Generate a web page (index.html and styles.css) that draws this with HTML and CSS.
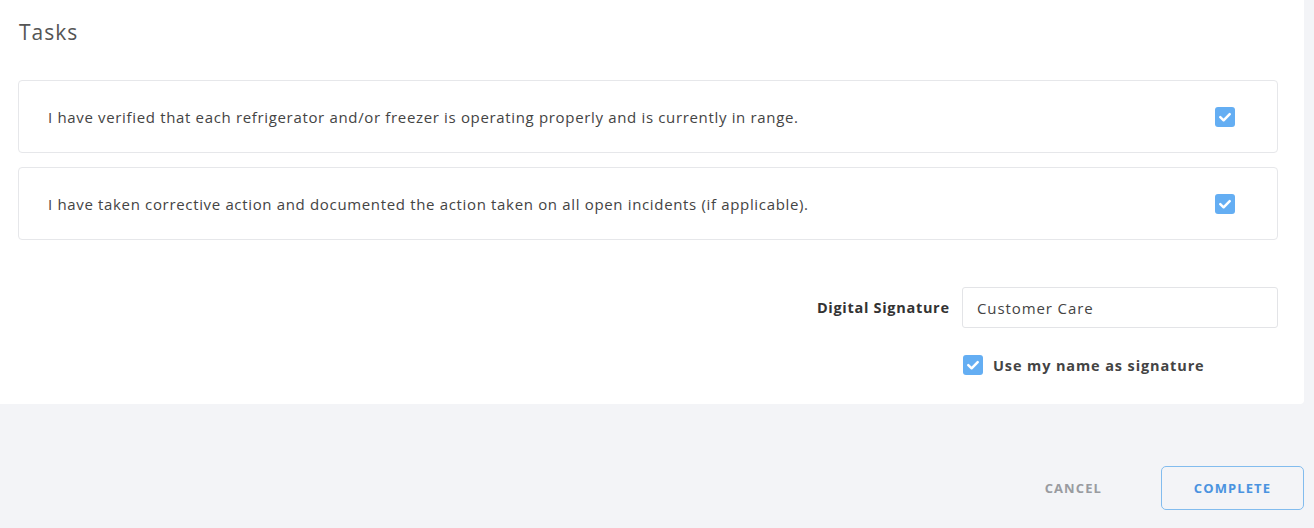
FILE: index.html
```html
<!DOCTYPE html>
<html>
<head>
<meta charset="utf-8">
<link rel="stylesheet" href="styles.css">
</head>
<body>
<div class="page">
  <section class="panel">
    <h2 class="title">Tasks</h2>
    <div class="tasks">
      <div class="task">
        <span class="task-text">I have verified that each refrigerator and/or freezer is operating properly and is currently in range.</span>
        <span class="check"><svg viewBox="0 0 20 20" width="20" height="20"><path d="M5.3 10.2 L8.6 13.3 L14.7 7.2" fill="none" stroke="#fff" stroke-width="2.5" stroke-linecap="round" stroke-linejoin="round"/></svg></span>
      </div>
      <div class="task">
        <span class="task-text">I have taken corrective action and documented the action taken on all open incidents (if applicable).</span>
        <span class="check"><svg viewBox="0 0 20 20" width="20" height="20"><path d="M5.3 10.2 L8.6 13.3 L14.7 7.2" fill="none" stroke="#fff" stroke-width="2.5" stroke-linecap="round" stroke-linejoin="round"/></svg></span>
      </div>
    </div>
    <div class="signature">
      <div class="sig-row">
        <label class="sig-label">Digital Signature</label>
        <div class="sig-input">Customer Care</div>
      </div>
      <div class="use-row">
        <span class="check"><svg viewBox="0 0 20 20" width="20" height="20"><path d="M5.3 10.2 L8.6 13.3 L14.7 7.2" fill="none" stroke="#fff" stroke-width="2.5" stroke-linecap="round" stroke-linejoin="round"/></svg></span>
        <span class="use-label">Use my name as signature</span>
      </div>
    </div>
  </section>
  <footer class="footer">
    <button class="btn btn-cancel">CANCEL</button>
    <button class="btn btn-complete">COMPLETE</button>
  </footer>
</div>
</body>
</html>
```

FILE: styles.css
```css
* { box-sizing: border-box; }
html, body {
  margin: 0;
  padding: 0;
  background: #f3f4f7;
  font-family: "Open Sans", "Liberation Sans", Arial, sans-serif;
}
.page {
  width: 1314px;
  height: 528px;
  display: flex;
  flex-direction: column;
}
.panel {
  width: 1304px;
  height: 404px;
  background: #fff;
  border-bottom-right-radius: 4px;
  padding: 18px 26px 0 18px;
}
.title {
  margin: 0 0 0 1px;
  font-size: 21px;
  font-weight: 400;
  color: #555;
  line-height: 28px;
  letter-spacing: 1px;
}
.tasks {
  margin-top: 34px;
  display: flex;
  flex-direction: column;
  gap: 14px;
}
.task {
  height: 73px;
  border: 1px solid #e6e7ea;
  border-radius: 4px;
  display: flex;
  align-items: center;
  justify-content: space-between;
  padding: 0 42px 0 29px;
}
.task-text {
  font-size: 15px;
  color: #444;
  letter-spacing: 0.66px;
}
.check {
  width: 20px;
  height: 20px;
  border-radius: 3px;
  background: #64aef3;
  display: inline-flex;
  flex: none;
}
.check svg { display: block; }
.signature {
  margin-top: 47px;
  display: flex;
  flex-direction: column;
  align-items: flex-end;
}
.sig-row {
  display: flex;
  align-items: center;
  gap: 13px;
}
.sig-label {
  font-size: 14.5px;
  font-weight: 700;
  color: #333;
  letter-spacing: 0.7px;
  margin-right: -0.7px;
}
.sig-input {
  width: 316px;
  height: 41px;
  border: 1px solid #e3e4e7;
  border-radius: 3px;
  padding: 0 14px;
  display: flex;
  align-items: center;
  font-size: 15px;
  color: #444;
  letter-spacing: 0.9px;
}
.use-row {
  width: 316px;
  margin-top: 27px;
  display: flex;
  align-items: center;
  gap: 10px;
  padding-left: 1px;
}
.use-label {
  font-size: 14.5px;
  font-weight: 700;
  color: #444;
  letter-spacing: 0.88px;
}
.footer {
  flex: 1;
  display: flex;
  justify-content: flex-end;
  align-items: flex-start;
  padding: 62px 10px 0 0;
  gap: 59px;
}
.btn {
  font-family: inherit;
  font-weight: 700;
  font-size: 13px;
  background: transparent;
  cursor: pointer;
  letter-spacing: 1.1px;
}
.btn-cancel {
  border: none;
  color: #999ba0;
  height: 44px;
  padding: 0;
}
.btn-complete {
  width: 143px;
  height: 44px;
  border: 1px solid #82bcee;
  border-radius: 5px;
  color: #4a93e0;
  background: #fff0;
}
```
